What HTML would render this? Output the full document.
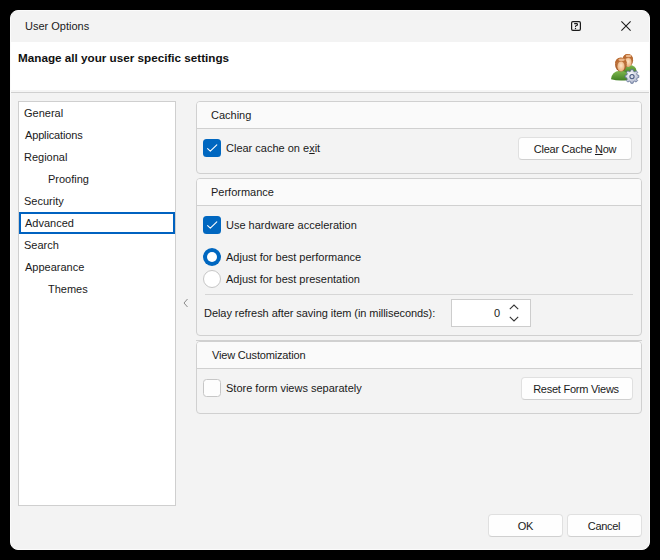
<!DOCTYPE html>
<html><head><meta charset="utf-8">
<style>
*{box-sizing:border-box;margin:0;padding:0}
html,body{width:660px;height:560px;background:#000;overflow:hidden}
body{position:relative;font-family:"Liberation Sans",sans-serif;font-size:11px;color:#1a1a1a}
.a{position:absolute}
.t{position:absolute;white-space:nowrap;line-height:14px}
#win{left:10px;top:10px;width:640px;height:540px;background:#f3f3f3;border:1px solid #fbfbfb;border-radius:8px;overflow:hidden}
#hdr{left:0;top:32px;width:638px;height:48px;background:#fff}
#sep1{left:0;top:80px;width:638px;height:2px;background:#f5f5f5}
#sep2{left:0;top:82px;width:638px;height:1px;background:#d0d0d0}
.list{left:18px;top:101px;width:158px;height:405px;background:#fff;border:1px solid #cfcfcf}
.sel{left:19px;top:212px;width:156px;height:22px;border:2px solid #0062c0}
.grp{border:1px solid #d0d0d0;border-radius:4px;background:#f3f3f3;overflow:hidden}
.gh{position:absolute;left:0;top:0;right:0;background:#fafafa;border-bottom:1px solid #d0d0d0}
.btn{position:absolute;padding-top:1px;letter-spacing:-0.25px;background:#fefefe;border:1px solid #e0e0e0;border-bottom-color:#d0d0d0;border-radius:4px;text-align:center}
.cb{position:absolute;width:18px;height:18px;border-radius:3.5px}
.cbon{background:#0067c0}
.cboff{background:#fdfdfd;border:1px solid #c6c6c6}
.rad{position:absolute;width:18px;height:18px;border-radius:50%}
</style></head><body>
<div id="win" class="a"></div>
<!-- title bar -->
<div class="t" style="left:25px;top:19px">User Options</div>
<!-- help icon -->
<svg class="a" style="left:570px;top:20px" width="12" height="12" viewBox="0 0 12 12">
<rect x="1.6" y="1.6" width="8.8" height="8.8" rx="1.3" fill="none" stroke="#1a1a1a" stroke-width="1.2"/>
<path d="M4.2 3.6 L6.6 3.6 Q7.5 3.6 7.5 4.5 Q7.5 5.5 6.5 5.5 Q5.5 5.5 5.5 6.5 L5.5 7" fill="none" stroke="#1a1a1a" stroke-width="1.1"/>
<circle cx="5.5" cy="8.5" r="0.7" fill="#1a1a1a"/>
</svg>
<!-- close icon -->
<svg class="a" style="left:620px;top:20px" width="12" height="12" viewBox="0 0 12 12">
<path d="M1.4 1.4 L10.6 10.6 M10.6 1.4 L1.4 10.6" stroke="#1a1a1a" stroke-width="1.05"/>
</svg>
<div class="a" style="left:11px;top:42px;width:638px;height:48px;background:#fff"></div>
<div class="a" style="left:11px;top:90px;width:638px;height:2px;background:#f5f5f5"></div>
<div class="a" style="left:11px;top:92px;width:638px;height:1px;background:#d0d0d0"></div>
<div class="t" style="left:18px;top:51px;font-weight:bold;font-size:11.7px;color:#111">Manage all your user specific settings</div>

<svg class="a" style="left:608px;top:52px" width="34" height="34" viewBox="0 0 34 34">
<defs>
<linearGradient id="gb" x1="0" y1="0" x2="0" y2="1"><stop offset="0" stop-color="#80b850"/><stop offset="1" stop-color="#3f7f22"/></linearGradient>
<linearGradient id="hr" x1="0" y1="0" x2="0" y2="1"><stop offset="0" stop-color="#d08850"/><stop offset="1" stop-color="#9a5020"/></linearGradient>
<radialGradient id="fc" cx="0.5" cy="0.4" r="0.6"><stop offset="0" stop-color="#fee6c6"/><stop offset="1" stop-color="#e8ac78"/></radialGradient>
<radialGradient id="gr" cx="0.4" cy="0.35" r="0.7"><stop offset="0" stop-color="#ffffff"/><stop offset="1" stop-color="#a8b0c8"/></radialGradient>
</defs>
<!-- back person -->
<path d="M14 20.5 Q15 13.5 21 13 Q27.5 13 28.5 18.5 L28.5 21 Q22 22 14 20.5Z" fill="url(#gb)"/>
<ellipse cx="19.8" cy="8.3" rx="5.3" ry="6.3" fill="url(#hr)"/>
<ellipse cx="20.2" cy="10.5" rx="3.4" ry="4.4" fill="url(#fc)"/>
<path d="M14.6 7.5 Q15 2 19.8 2 Q24.6 2 25 7.5 Q22.5 5.2 19.8 5.6 Q17 5.2 14.6 7.5Z" fill="#b8682f"/>
<ellipse cx="20.5" cy="4" rx="2.8" ry="1.3" fill="#f2c49a" opacity="0.85"/>
<!-- front person -->
<path d="M3 27.3 Q3.8 19.5 11.5 18.8 Q19 18.8 20.5 24 L20.5 28 Q11 29.5 3 27.3Z" fill="url(#gb)"/>
<ellipse cx="12.9" cy="12.6" rx="5.9" ry="7" fill="url(#hr)"/>
<ellipse cx="13" cy="14.5" rx="3.6" ry="4.9" fill="url(#fc)"/>
<path d="M7 11.5 Q7.3 5.8 12.9 5.8 Q18.5 5.8 18.8 11.5 Q16 8.8 12.9 9.2 Q9.8 8.8 7 11.5Z" fill="#b8682f"/>
<ellipse cx="13.6" cy="7.8" rx="3.2" ry="1.4" fill="#f2c49a" opacity="0.85"/>
<!-- gear -->
<g transform="translate(24 24.6)">
<path d="M-1.3 -6.8 L1.3 -6.8 L1.7 -4.9 L3.3 -4.2 L4.9 -5.3 L6.7 -3.5 L5.6 -1.9 L6.2 -0.3 L8 0 L8 2.6 L6.2 3 L5.5 4.6 L6.6 6.2 L4.8 8 L3.2 6.9 L1.6 7.5 L1.3 9.4 L-1.3 9.4 L-1.7 7.5 L-3.3 6.9 L-4.9 8 L-6.7 6.2 L-5.6 4.6 L-6.2 3 L-8 2.6 L-8 0 L-6.2 -0.3 L-5.5 -1.9 L-6.6 -3.5 L-4.8 -5.3 L-3.2 -4.2 L-1.6 -4.9Z" transform="translate(0 -1.3) scale(0.85)" fill="url(#gr)" stroke="#5a6a90" stroke-width="0.9"/>
<circle cx="0" cy="0" r="2.1" fill="#d8dce8" stroke="#4a5a80" stroke-width="1.1"/>
</g>
</svg>

<!-- list -->
<div class="a list"></div>
<div class="a sel"></div>
<div class="t" style="left:24px;top:106px">General</div>
<div class="t" style="left:25px;top:128px;letter-spacing:-0.15px">Applications</div>
<div class="t" style="left:24px;top:150px">Regional</div>
<div class="t" style="left:48px;top:172px">Proofing</div>
<div class="t" style="left:24px;top:194px">Security</div>
<div class="t" style="left:25px;top:216px">Advanced</div>
<div class="t" style="left:24px;top:238px">Search</div>
<div class="t" style="left:25px;top:260px">Appearance</div>
<div class="t" style="left:48px;top:282px">Themes</div>

<!-- splitter arrow -->
<svg class="a" style="left:182px;top:298px" width="8" height="10" viewBox="0 0 8 10">
<path d="M5.5 1 L2 5 L5.5 9" fill="none" stroke="#8a8a8a" stroke-width="1"/>
</svg>

<!-- Caching -->
<div class="a grp" style="left:196px;top:101px;width:446px;height:73px"><div class="gh" style="height:27px"></div></div>
<div class="t" style="left:211px;top:108px">Caching</div>
<div class="cb cbon" style="left:203px;top:139px"></div><svg class="a" style="left:203px;top:139px" width="18" height="18" viewBox="0 0 18 18"><path d="M4.6 9.6 L7.3 12.1 L13.8 5.8" fill="none" stroke="#fff" stroke-width="1.1" stroke-linecap="round" stroke-linejoin="round"/></svg>
<div class="t" style="left:226px;top:141px">Clear cache on e<u>x</u>it</div>
<div class="btn" style="left:518px;top:137px;width:114px;height:23px;line-height:21px">Clear Cache <u>N</u>ow</div>

<!-- Performance -->
<div class="a grp" style="left:196px;top:178px;width:446px;height:158px"><div class="gh" style="height:27px"></div></div>
<div class="t" style="left:211px;top:185px">Performance</div>
<div class="cb cbon" style="left:203px;top:216px"></div><svg class="a" style="left:203px;top:216px" width="18" height="18" viewBox="0 0 18 18"><path d="M4.6 9.6 L7.3 12.1 L13.8 5.8" fill="none" stroke="#fff" stroke-width="1.1" stroke-linecap="round" stroke-linejoin="round"/></svg>
<div class="t" style="left:226px;top:218px">Use hardware acceleration</div>
<div class="rad" style="left:203px;top:248px;background:#0067c0"></div>
<div class="rad" style="left:207px;top:252px;width:10px;height:10px;background:#fff"></div>
<div class="t" style="left:226px;top:250px">Adjust for best performance</div>
<div class="rad" style="left:203px;top:270px;background:#fff;border:1px solid #c6c6c6"></div>
<div class="t" style="left:226px;top:272px">Adjust for best presentation</div>
<div class="a" style="left:205px;top:294px;width:428px;height:1px;background:#d6d6d6"></div>
<div class="t" style="left:204px;top:306px;letter-spacing:-0.06px">Delay refresh after saving item (in milliseconds):</div>
<div class="a" style="left:451px;top:299px;width:80px;height:28px;background:#fff;border:1px solid #cdcdcd"></div>
<div class="t" style="left:494px;top:306px">0</div>
<svg class="a" style="left:508px;top:302px" width="12" height="22" viewBox="0 0 12 22">
<path d="M1.8 7.2 L6 3 L10.2 7.2" fill="none" stroke="#333" stroke-width="1.1"/>
<path d="M1.8 14.8 L6 19 L10.2 14.8" fill="none" stroke="#333" stroke-width="1.1"/>
</svg>


<!-- splitter line -->
<div class="a" style="left:196px;top:340px;width:446px;height:1px;background:#d0d0d0"></div>

<!-- View Customization -->
<div class="a grp" style="left:196px;top:341px;width:446px;height:73px"><div class="gh" style="height:27px"></div></div>
<div class="t" style="left:212px;top:348px;letter-spacing:-0.17px">View Customization</div>
<div class="cb cboff" style="left:203px;top:379px"></div>
<div class="t" style="left:226px;top:381px">Store form views separately</div>
<div class="btn" style="left:521px;top:377px;width:112px;height:23px;line-height:21px;padding-right:2px">Reset Form Views</div>

<!-- OK / Cancel -->
<div class="btn" style="left:488px;top:514px;width:75px;height:23px;line-height:21px">OK</div>
<div class="btn" style="left:567px;top:514px;width:75px;height:23px;line-height:21px;letter-spacing:-0.3px;padding-right:1px">Cancel</div>
</body></html>
